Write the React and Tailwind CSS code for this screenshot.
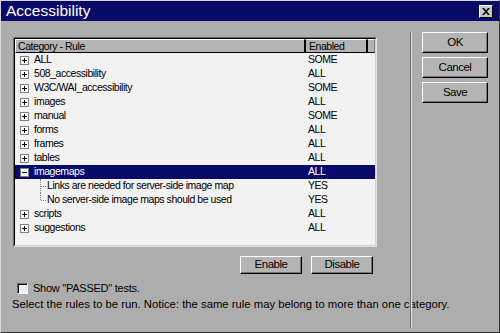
import { Fragment } from 'react'

const rows = [
  { label: 'ALL', value: 'SOME', kind: 'closed' },
  { label: '508_accessibility', value: 'ALL', kind: 'closed' },
  { label: 'W3C/WAI_accessibility', value: 'SOME', kind: 'closed' },
  { label: 'images', value: 'ALL', kind: 'closed' },
  { label: 'manual', value: 'SOME', kind: 'closed' },
  { label: 'forms', value: 'ALL', kind: 'closed' },
  { label: 'frames', value: 'ALL', kind: 'closed' },
  { label: 'tables', value: 'ALL', kind: 'closed' },
  { label: 'imagemaps', value: 'ALL', kind: 'open', selected: true },
  { label: 'Links are needed for server-side image map', value: 'YES', kind: 'child' },
  { label: 'No server-side image maps should be used', value: 'YES', kind: 'child', last: true },
  { label: 'scripts', value: 'ALL', kind: 'closed' },
  { label: 'suggestions', value: 'ALL', kind: 'closed' },
]

function Expander({ open }) {
  return (
    <div className="relative flex h-[9px] w-[9px] shrink-0 items-center justify-center border border-[#808080] bg-white">
      <div className="h-px w-[5px] bg-black" />
      {!open && <div className="absolute h-[5px] w-px bg-black" />}
    </div>
  )
}

function Button({ children, className = '' }) {
  return (
    <div
      className={`flex items-center justify-center border border-t-white border-l-white border-r-black border-b-black bg-[#b4b4b4] text-[11.5px] tracking-[-0.5px] text-black shadow-[inset_-1px_-1px_0_#767676] ${className}`}
    >
      {children}
    </div>
  )
}

export default function App() {
  return (
    <div
      className="flex h-[333px] w-[500px] flex-col border border-t-[#d8d8d8] border-l-[#d8d8d8] border-r-[#303030] border-b-[#303030] bg-[#adadad] text-black"
      style={{ fontFamily: '"Liberation Sans", Arial, sans-serif' }}
    >
      <div className="flex h-[20px] items-center justify-between bg-[#0a0a6a] pl-[5px] pr-[6px]">
        <span className="text-[15.5px] leading-none text-white">Accessibility</span>
        <div className="flex h-[13px] w-[14px] items-center justify-center border border-t-white border-l-white border-r-black border-b-black bg-[#c8c8c8]">
          <svg width="8" height="7" viewBox="0 0 8 7">
            <path d="M0 0 H2 L4 2.2 L6 0 H8 L5 3.5 L8 7 H6 L4 4.8 L2 7 H0 L3 3.5 Z" fill="#000" />
          </svg>
        </div>
      </div>

      <div className="flex flex-1">
        <div className="flex w-[409px] flex-col pl-[12px] pt-[16px]">
          <div className="h-[210px] w-[364px] border border-t-[#6a6a6a] border-l-[#6a6a6a] border-r-[#e0e0e0] border-b-[#e0e0e0]">
            <div className="h-full w-full border border-t-black border-l-black border-r-[#d4d4d4] border-b-[#d4d4d4] bg-[#f2f2f2] text-[10.5px] tracking-[-0.45px]">
              <div className="flex h-[14px] leading-[12px]">
                <div className="w-[290px] border border-t-white border-l-white border-r-black border-b-black bg-[#b4b4b4] pl-[2px]">
                  Category - Rule
                </div>
                <div className="w-[62px] border border-t-white border-l-black border-r-black border-b-black bg-[#b4b4b4] pl-[3px]">
                  Enabled
                </div>
                <div className="flex-1 border border-t-white border-l-black border-r-[#808080] border-b-black bg-[#b4b4b4]" />
              </div>
              {rows.map((r, i) => (
                <div
                  key={i}
                  className={`flex h-[14px] items-center ${r.selected ? 'bg-[#0a0a6a] text-white' : ''}`}
                >
                  <div className="flex w-[290px] items-center">
                    {r.kind === 'child' ? (
                      <Fragment>
                        <div className="relative h-[14px] w-[30px] shrink-0">
                          <div
                            className={`absolute left-[25px] top-0 w-0 border-l border-dotted border-[#808080] ${r.last ? 'h-[7px]' : 'h-[14px]'}`}
                          />
                          <div className="absolute left-[26px] top-[7px] h-0 w-[5px] border-t border-dotted border-[#808080]" />
                        </div>
                        <span className="pl-[2px]">{r.label}</span>
                      </Fragment>
                    ) : (
                      <Fragment>
                        <div className="w-[5px] shrink-0" />
                        <Expander open={r.kind === 'open'} />
                        <span className="pl-[5px]">{r.label}</span>
                      </Fragment>
                    )}
                  </div>
                  <div className="pl-[3px]">{r.value}</div>
                </div>
              ))}
            </div>
          </div>

          <div className="mt-[9px] flex w-[364px] justify-end gap-[9px] pr-[4px]">
            <Button className="h-[18px] w-[62px]">Enable</Button>
            <Button className="h-[18px] w-[62px]">Disable</Button>
          </div>

          <div className="mt-[8px] flex items-center pl-[4px]">
            <div className="h-[11px] w-[11px] border border-t-[#6a6a6a] border-l-[#6a6a6a] border-r-white border-b-white bg-[#f0f0f0] shadow-[inset_1px_1px_0_#000]" />
            <span className="pl-[5px] text-[11px] leading-[13px] tracking-[-0.25px]">
              Show "PASSED" tests.
            </span>
          </div>
          <div className="-ml-[1px] mt-[3px] whitespace-nowrap text-[11.3px] leading-[13px]">
            Select the rules to be run. Notice: the same rule may belong to more than one category.
          </div>
        </div>

        <div className="mb-[4px] mt-[11px] w-px bg-[#707070] shadow-[1px_0_0_#e0e0e0]" />

        <div className="flex flex-col gap-[4px] pl-[11px] pt-[11px]">
          <Button className="h-[21px] w-[66px]">OK</Button>
          <Button className="h-[21px] w-[66px]">Cancel</Button>
          <Button className="h-[21px] w-[66px]">Save</Button>
        </div>
      </div>
    </div>
  )
}
